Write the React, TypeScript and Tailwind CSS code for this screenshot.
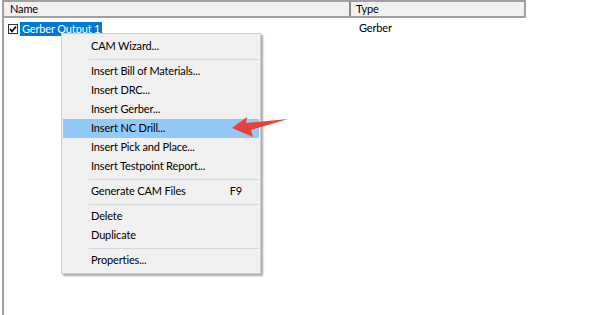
import React from "react";

const font = { fontFamily: 'Lato, "Liberation Sans", sans-serif' };

type Item = { label?: string; sep?: boolean; shortcut?: string; hi?: boolean };

const items: Item[] = [
  { label: "CAM Wizard..." },
  { sep: true },
  { label: "Insert Bill of Materials..." },
  { label: "Insert DRC..." },
  { label: "Insert Gerber..." },
  { label: "Insert NC Drill...", hi: true },
  { label: "Insert Pick and Place..." },
  { label: "Insert Testpoint Report..." },
  { sep: true },
  { label: "Generate CAM Files", shortcut: "F9" },
  { sep: true },
  { label: "Delete" },
  { label: "Duplicate" },
  { sep: true },
  { label: "Properties..." },
];

export default function App() {
  return (
    <div className="relative w-[590px] h-[315px] bg-white overflow-hidden text-[11px] tracking-[-0.15px] text-black" style={font}>
      <div className="ml-[2px] w-[524px] h-[315px] border-l-2 border-[#a0a0a0] flex flex-col">
        <div className="flex h-[18px] border-t-2 border-b-2 border-[#a0a0a0] bg-[#f0f0f0] border-r-2">
          <div className="w-[347px] pl-[6px] leading-[14px] border-r-2 border-[#8a8a8a]">Name</div>
          <div className="flex-1 pl-[5px] leading-[14px]">Type</div>
        </div>
        <div className="flex h-[17px] mt-[2px] items-center">
          <div className="w-[349px] flex items-center pl-[4px]">
            <div className="w-[10px] h-[10px] border border-[#333] bg-white flex items-center justify-center">
              <svg width="8" height="8" viewBox="0 0 8 8">
                <path d="M1 4 L3 6.5 L7 1.5" stroke="#000" strokeWidth="1.7" fill="none" />
              </svg>
            </div>
            <div className="ml-[2px] bg-[#0078d7] text-white px-[2px] leading-[14px] h-[14px]">Gerber Output 1</div>
          </div>
          <div className="pl-[6px]">Gerber</div>
        </div>
      </div>

      <div className="absolute left-[61px] top-[33px] w-[200px] bg-[#f0f0f0] border border-[#cfcfcf] shadow-[2px_2px_2px_rgba(0,0,0,0.35)] pt-[3px] pb-[3px]">
        {items.map((it, i) =>
          it.sep ? (
            <div key={i} className="h-[6px] flex items-center pl-[27px] pr-[1px]">
              <div className="h-px w-full bg-[#d7d7d7]" />
            </div>
          ) : (
            <div
              key={i}
              className={`h-[19px] mx-px flex items-center pl-[28px] pr-[17px] ${it.hi ? "bg-[#91c9f7]" : ""}`}
            >
              <span className="flex-1">{it.label}</span>
              {it.shortcut && <span>{it.shortcut}</span>}
            </div>
          )
        )}
      </div>

      <svg className="absolute left-0 top-0" width="590" height="315">
        <polygon points="232,128 247,117 246,123 288,119 251,130 253,137" fill="#e8403a" />
      </svg>
    </div>
  );
}
